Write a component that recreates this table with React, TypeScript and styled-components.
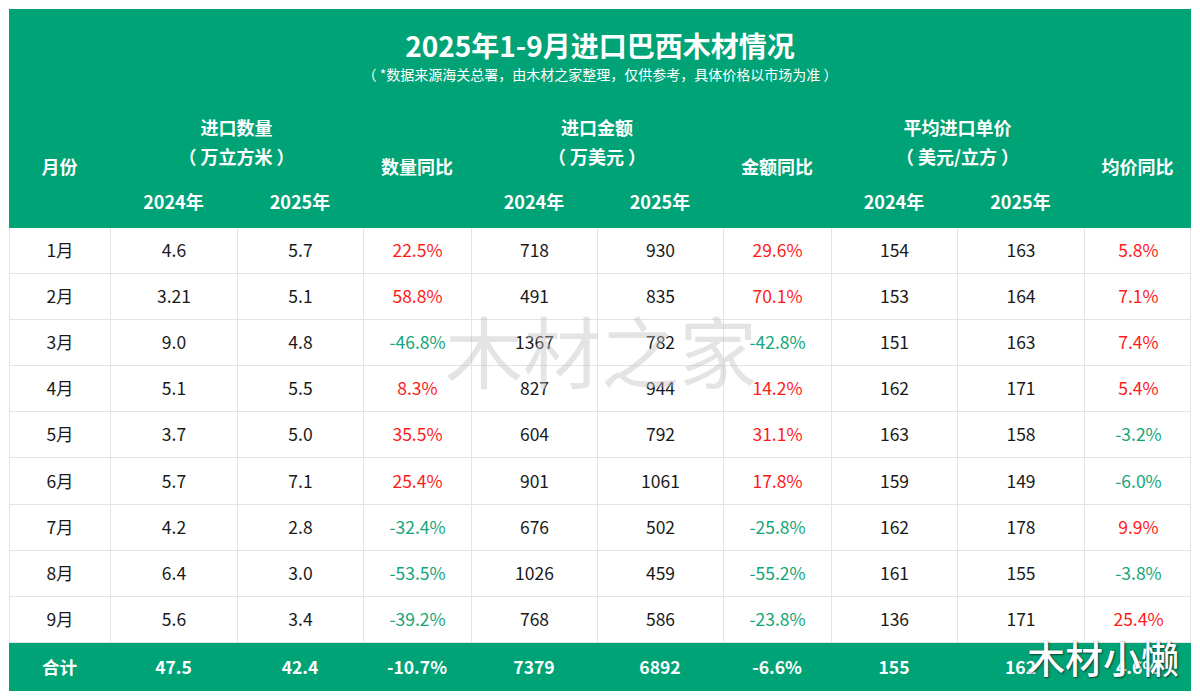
import React from "react";
import styled, { createGlobalStyle } from "styled-components";

const GlobalStyle = createGlobalStyle`
  html, body {
    margin: 0;
    padding: 0;
    background: #ffffff;
  }
  body {
    font-family: "Noto Sans CJK SC", "Noto Sans", sans-serif;
  }
`;

const COLS = "101px 127px 126px 108px 126px 126px 108px 126px 127px 107px";
const GREEN = "#00a376";

const Page = styled.div`
  padding: 9px 9px 0 9px;
  width: 1182px;
`;

const Sheet = styled.div`
  position: relative;
  width: 1182px;
  overflow: hidden;
`;

const Header = styled.div`
  background: ${GREEN};
  color: #ffffff;
`;

const TitleBlock = styled.div`
  height: 101px;
  display: flex;
  flex-direction: column;
  align-items: center;
  padding-top: 18px;
  box-sizing: border-box;
`;

const Title = styled.div`
  font-size: 28px;
  font-weight: 700;
  line-height: 36px;
`;

const Subtitle = styled.div`
  font-size: 14px;
  line-height: 20px;
  margin-top: 1px;
  white-space: pre;
`;

const HeadGrid = styled.div`
  display: grid;
  grid-template-columns: ${COLS};
  grid-template-rows: 70px 48px;
`;

const GroupLabel = styled.div<{ $col: number }>`
  grid-column: ${(p) => p.$col} / span 2;
  grid-row: 1;
  display: flex;
  flex-direction: column;
  align-items: center;
  padding-top: 3px;
  font-size: 18px;
  font-weight: 700;
  line-height: 29px;
  white-space: pre;
`;

const SingleLabel = styled.div<{ $col: number }>`
  grid-column: ${(p) => p.$col};
  grid-row: 1 / span 2;
  display: flex;
  align-items: center;
  justify-content: center;
  padding-bottom: 6px;
  font-size: 18px;
  font-weight: 700;
`;

const YearLabel = styled.div<{ $col: number }>`
  grid-column: ${(p) => p.$col};
  grid-row: 2;
  display: flex;
  align-items: center;
  justify-content: center;
  padding-bottom: 6px;
  font-size: 18px;
  font-weight: 700;
`;

const Body = styled.div`
  display: grid;
  grid-template-columns: ${COLS};
  grid-auto-rows: 46.1px;
  border-left: 1px solid #e2e2e2;
  border-right: 1px solid #e2e2e2;
`;

const Cell = styled.div<{ $tone?: "up" | "down" }>`
  display: flex;
  align-items: center;
  justify-content: center;
  padding-bottom: 2px;
  border-right: 1px solid #e4e4e4;
  border-bottom: 1px solid #e4e4e4;
  font-size: 17.5px;
  color: ${(p) =>
    p.$tone === "up" ? "#ff1a1a" : p.$tone === "down" ? "#14a57a" : "#1a1a1a"};
  &:nth-child(10n) {
    border-right: none;
  }
`;

const Footer = styled.div`
  display: grid;
  grid-template-columns: ${COLS};
  height: 48px;
  background: ${GREEN};
`;

const FootCell = styled.div`
  display: flex;
  align-items: center;
  justify-content: center;
  color: #ffffff;
  font-size: 17.5px;
  font-weight: 700;
`;

const Watermark = styled.div`
  position: absolute;
  left: 436px;
  top: 290px;
  font-size: 78px;
  font-weight: 400;
  line-height: 100px;
  color: rgba(190, 190, 190, 0.42);
  pointer-events: none;
  white-space: nowrap;
`;

const Stamp = styled.div`
  position: absolute;
  right: 12px;
  bottom: 9px;
  font-size: 38px;
  font-weight: 500;
  line-height: 50px;
  color: #ffffff;
  text-shadow: 1px 1px 2px rgba(0, 0, 0, 0.55), 0 0 1px rgba(0, 0, 0, 0.5);
  white-space: nowrap;
`;

type Row = [string, string, string, string, string, string, string, string, string, string];

const rows: Row[] = [
  ["1月", "4.6", "5.7", "22.5%", "718", "930", "29.6%", "154", "163", "5.8%"],
  ["2月", "3.21", "5.1", "58.8%", "491", "835", "70.1%", "153", "164", "7.1%"],
  ["3月", "9.0", "4.8", "-46.8%", "1367", "782", "-42.8%", "151", "163", "7.4%"],
  ["4月", "5.1", "5.5", "8.3%", "827", "944", "14.2%", "162", "171", "5.4%"],
  ["5月", "3.7", "5.0", "35.5%", "604", "792", "31.1%", "163", "158", "-3.2%"],
  ["6月", "5.7", "7.1", "25.4%", "901", "1061", "17.8%", "159", "149", "-6.0%"],
  ["7月", "4.2", "2.8", "-32.4%", "676", "502", "-25.8%", "162", "178", "9.9%"],
  ["8月", "6.4", "3.0", "-53.5%", "1026", "459", "-55.2%", "161", "155", "-3.8%"],
  ["9月", "5.6", "3.4", "-39.2%", "768", "586", "-23.8%", "136", "171", "25.4%"],
];

const total = ["合计", "47.5", "42.4", "-10.7%", "7379", "6892", "-6.6%", "155", "162", "4.6%"];

function tone(v: string): "up" | "down" | undefined {
  if (!v.endsWith("%")) return undefined;
  return v.startsWith("-") ? "down" : "up";
}

export default function App() {
  return (
    <Page>
      <GlobalStyle />
      <Sheet>
        <Header>
          <TitleBlock>
            <Title>2025年1-9月进口巴西木材情况</Title>
            <Subtitle>（ *数据来源海关总署，由木材之家整理，仅供参考，具体价格以市场为准 ）</Subtitle>
          </TitleBlock>
          <HeadGrid>
            <SingleLabel $col={1}>月份</SingleLabel>
            <GroupLabel $col={2}>
              <span>进口数量</span>
              <span>（ 万立方米 ）</span>
            </GroupLabel>
            <SingleLabel $col={4}>数量同比</SingleLabel>
            <GroupLabel $col={5}>
              <span>进口金额</span>
              <span>（ 万美元 ）</span>
            </GroupLabel>
            <SingleLabel $col={7}>金额同比</SingleLabel>
            <GroupLabel $col={8}>
              <span>平均进口单价</span>
              <span>（ 美元/立方 ）</span>
            </GroupLabel>
            <SingleLabel $col={10}>均价同比</SingleLabel>
            <YearLabel $col={2}>2024年</YearLabel>
            <YearLabel $col={3}>2025年</YearLabel>
            <YearLabel $col={5}>2024年</YearLabel>
            <YearLabel $col={6}>2025年</YearLabel>
            <YearLabel $col={8}>2024年</YearLabel>
            <YearLabel $col={9}>2025年</YearLabel>
          </HeadGrid>
        </Header>
        <Body>
          {rows.map((r) =>
            r.map((v, i) => (
              <Cell key={r[0] + i} $tone={tone(v)}>
                {v}
              </Cell>
            ))
          )}
        </Body>
        <Footer>
          {total.map((v, i) => (
            <FootCell key={i}>{v}</FootCell>
          ))}
        </Footer>
        <Watermark>木材之家</Watermark>
        <Stamp>木材小懒</Stamp>
      </Sheet>
    </Page>
  );
}
